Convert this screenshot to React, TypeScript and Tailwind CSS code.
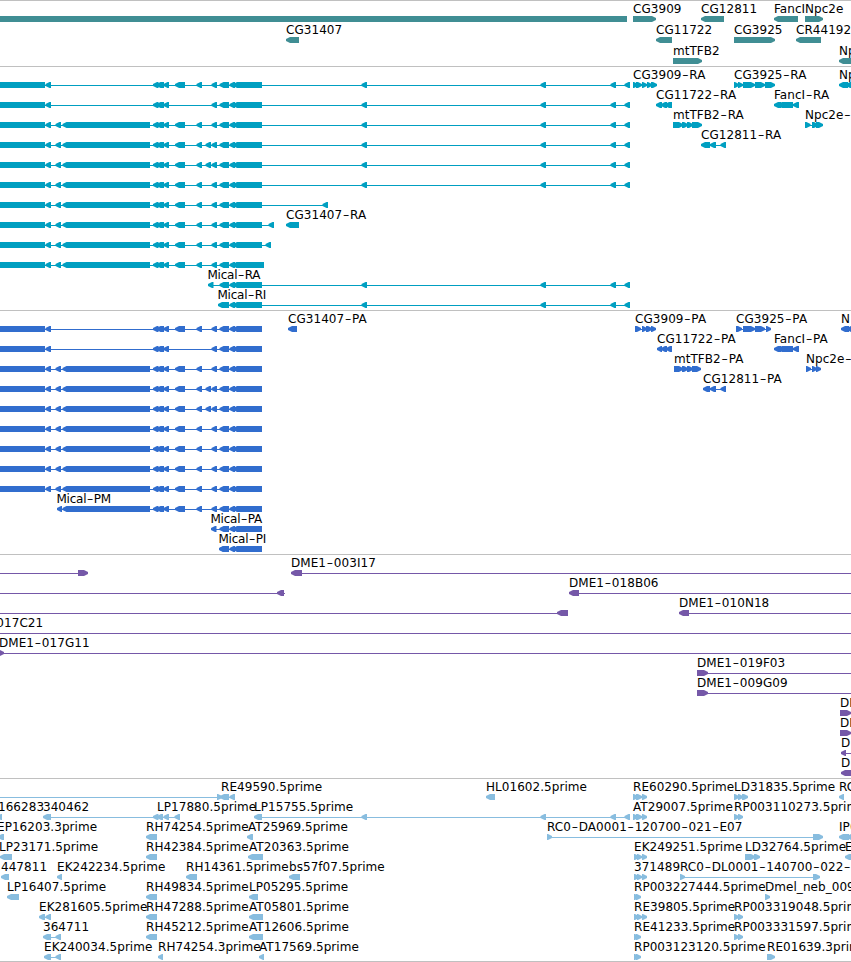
type Span = [number, number];
type Dir = 'left' | 'right';

interface Feature {
  row: number;
  dir?: Dir;
  label?: string;
  x?: number;
  blocks: Span[];
  solid?: Span[];
  line?: Span;
}

interface TrackProps {
  height: number;
  color: string;
  rowHeight?: number;
  barTop: number;
  features: Feature[];
}

// Exons shared by the Mical isoforms
const TAIL: Span[] = [[219.5, 229], [229.5, 235], [233, 262]];
const D: Span[] = [[153, 158.5], [156.5, 164], [163.5, 169]];
const E: Span = [175, 185];
const F: Span = [196.5, 202];
const G: Span = [211.5, 217];
const H: Span = [205.5, 211];
const A: Span = [45.5, 51];
const BC: Span[] = [[55.5, 61], [62.5, 150]];
const UPSTREAM: Span[] = [[361.5, 367], [540.5, 546], [610.5, 616], [624.5, 630]];
const LEFT_BAR: Span[] = [[-5, 45]];

const SHORT: Span[] = [A, ...D, E, F, G, ...TAIL];
const SKIPPED: Span[] = [A, ...D, G, ...TAIL];
const LONG: Span[] = [A, ...BC, ...D, E, F, G, ...TAIL];
const EXTRA: Span[] = [A, ...BC, ...D, E, F, H, G, ...TAIL];

const mical = (row: number, blocks: Span[], end = 262): Feature => ({
  row,
  blocks,
  solid: LEFT_BAR,
  line: [0, end],
});

const GENES: Feature[] = [
  { row: 0, blocks: [], solid: [[-5, 627]] },
  { row: 0, dir: 'right', label: 'CG3909', blocks: [[633, 656]] },
  { row: 0, label: 'CG12811', blocks: [[701, 724]] },
  { row: 0, label: 'FancI', blocks: [[774, 798]] },
  { row: 0, dir: 'right', label: 'Npc2e', blocks: [[805, 823]] },
  { row: 1, label: 'CG31407', blocks: [[286, 299]] },
  { row: 1, label: 'CG11722', blocks: [[656, 672]] },
  { row: 1, dir: 'right', label: 'CG3925', blocks: [[734, 775]] },
  { row: 1, label: 'CR44192', blocks: [[796, 821]] },
  { row: 2, dir: 'right', label: 'mtTFB2', blocks: [[673, 702]] },
  { row: 2, label: 'Np', blocks: [[839, 860]] },
];

const TRANSCRIPTS: Feature[] = [
  mical(0, [...SHORT, ...UPSTREAM], 630),
  mical(1, [...SKIPPED, ...UPSTREAM], 630),
  mical(2, [...LONG, ...UPSTREAM], 630),
  mical(3, [...EXTRA, ...UPSTREAM], 630),
  mical(4, [...EXTRA, ...UPSTREAM], 630),
  mical(5, [...LONG, ...UPSTREAM], 630),
  mical(6, [...LONG, [322.5, 328]], 328),
  mical(7, [...LONG, [268.5, 274]], 274),
  mical(8, [...LONG, [265.5, 271]], 271),
  mical(9, [...LONG, [233, 264]], 264),
  { row: 10, label: 'Mical-RA', x: 207.5, blocks: [[208, 213.5], ...TAIL, ...UPSTREAM] },
  { row: 11, label: 'Mical-RI', x: 217.5, blocks: [[218, 229], ...TAIL, ...UPSTREAM] },
  { row: 7, label: 'CG31407-RA', blocks: [[286, 299]] },
  { row: 0, dir: 'right', label: 'CG3909-RA', blocks: [[633, 638], [636, 642], [642, 647], [647, 652], [651, 657]] },
  { row: 0, dir: 'right', label: 'CG3925-RA', blocks: [[734, 739], [738, 743], [743, 755], [755, 765], [765, 775]] },
  { row: 0, label: 'Np', blocks: [[839, 848], [846, 860]] },
  { row: 1, label: 'CG11722-RA', blocks: [[656, 662], [661, 667], [665, 672]] },
  { row: 1, label: 'FancI-RA', blocks: [[774, 781], [778, 793], [793, 799]] },
  { row: 2, dir: 'right', label: 'mtTFB2-RA', blocks: [[673, 683], [682, 688], [687, 693], [692, 702]] },
  { row: 2, dir: 'right', label: 'Npc2e-RA', blocks: [[805, 810.5], [812, 818], [816, 823]] },
  { row: 3, label: 'CG12811-RA', blocks: [[701, 710], [710, 716], [720.5, 726]] },
];

const PROTEINS: Feature[] = [
  mical(0, SHORT),
  mical(1, SKIPPED),
  mical(2, LONG),
  mical(3, EXTRA),
  mical(4, EXTRA),
  mical(5, LONG),
  mical(6, LONG),
  mical(7, LONG),
  mical(8, LONG),
  { row: 9, label: 'Mical-PM', x: 56.5, blocks: [[57, 62], [62.5, 150], ...D, E, F, G, ...TAIL] },
  { row: 10, label: 'Mical-PA', x: 210.5, blocks: [[211, 216.5], ...TAIL] },
  { row: 11, label: 'Mical-PI', x: 218.5, blocks: [[219, 229], ...TAIL] },
  { row: 0, label: 'CG31407-PA', blocks: [[288, 297]] },
  { row: 0, dir: 'right', label: 'CG3909-PA', blocks: [[635, 641], [642, 647], [646, 652], [651, 656]] },
  { row: 0, dir: 'right', label: 'CG3925-PA', blocks: [[736, 742], [743, 755], [755, 765], [766, 771]] },
  { row: 0, label: 'N', blocks: [[841, 849], [847, 860]] },
  { row: 1, label: 'CG11722-PA', blocks: [[657, 662], [661, 667], [666, 672]] },
  { row: 1, label: 'FancI-PA', blocks: [[774, 781], [778, 793], [793, 799]] },
  { row: 2, dir: 'right', label: 'mtTFB2-PA', blocks: [[674, 683], [682, 688], [687, 693], [692, 701]] },
  { row: 2, dir: 'right', label: 'Npc2e-PA', blocks: [[806, 811], [812, 817], [816, 821]] },
  { row: 3, label: 'CG12811-PA', blocks: [[703, 710], [710, 716], [720.5, 726]] },
];

const CLONES: Feature[] = [
  { row: 0, dir: 'right', blocks: [[78, 88]], line: [0, 88] },
  { row: 0, label: 'DME1-003I17', blocks: [[291, 302]], line: [291, 851] },
  { row: 1, blocks: [[277, 284]], line: [0, 285] },
  { row: 1, label: 'DME1-018B06', blocks: [[569, 579]], line: [569, 851] },
  { row: 2, blocks: [[557, 568]], line: [0, 568] },
  { row: 2, label: 'DME1-010N18', blocks: [[679, 689]], line: [679, 851] },
  { row: 3, label: 'DME1-017C21', x: -46.5, blocks: [], line: [0, 851] },
  { row: 4, dir: 'right', label: 'DME1-017G11', x: -1, blocks: [[-5, 4]], line: [0, 851] },
  { row: 5, dir: 'right', label: 'DME1-019F03', blocks: [[697, 708]], line: [697, 851] },
  { row: 6, dir: 'right', label: 'DME1-009G09', blocks: [[697, 708]], line: [697, 851] },
  { row: 7, dir: 'right', label: 'DM', blocks: [[840, 851]] },
  { row: 8, dir: 'right', label: 'DM', blocks: [[840, 851]] },
  { row: 9, label: 'D', blocks: [[841, 846]], line: [841, 851] },
  { row: 10, label: 'D', blocks: [[841, 860]] },
];

const THREE: Span[] = [[634, 639], [637, 642], [642, 647]];
const TWO: Span[] = [[634, 639], [636, 641]];
const PAIR: Span[] = [[734, 739], [738, 743]];

const ESTS: Feature[] = [
  { row: 0, dir: 'right', blocks: [[217, 222]], line: [0, 222] },
  { row: 0, label: 'RE49590.5prime', x: 221, blocks: [[220, 229], [229.5, 235]] },
  { row: 0, label: 'HL01602.5prime', blocks: [[486, 495]] },
  { row: 0, dir: 'right', label: 'RE60290.5prime', blocks: [[633, 638], [636, 642], [642, 647]] },
  { row: 0, dir: 'right', label: 'LD31835.5prime', blocks: [[734, 739], [738, 743], [742, 748]] },
  { row: 0, label: 'RC', blocks: [[839, 844]] },
  { row: 1, label: '166283', x: -2, blocks: [[-3, 2]] },
  { row: 1, label: '340462', blocks: [[43, 49], [45.5, 51], [153, 158.5], [157, 163], [163.5, 169], [174.5, 180]] },
  { row: 1, label: 'LP17880.5prime', x: 157, blocks: [] },
  { row: 1, label: 'LP15755.5prime', blocks: [[254, 262], ...UPSTREAM] },
  { row: 1, dir: 'right', label: 'AT29007.5prime', blocks: [[633, 638], [636, 642], [642, 647]] },
  { row: 1, dir: 'right', label: 'RP003110273.5prime', blocks: PAIR },
  { row: 2, label: 'EP16203.3prime', x: -3, blocks: [[-2, 4]] },
  { row: 2, label: 'RH74254.5prime', blocks: [[146, 157]] },
  { row: 2, label: 'AT25969.5prime', x: 248, blocks: [[247, 253]] },
  { row: 2, dir: 'right', label: 'RC0-DA0001-120700-021-E07', blocks: [[547, 552], [813, 823]] },
  { row: 2, label: 'IP0', blocks: [[839, 849], [847, 860]] },
  { row: 3, label: 'LP23171.5prime', x: -1, blocks: [[0, 12]] },
  { row: 3, label: 'RH42384.5prime', blocks: [[146, 157]] },
  { row: 3, label: 'AT20363.5prime', x: 249, blocks: [[248, 263]] },
  { row: 3, dir: 'right', label: 'EK249251.5prime', blocks: THREE },
  { row: 3, dir: 'right', label: 'LD32764.5prime', blocks: [[745, 755], [754, 760]] },
  { row: 3, label: 'E', blocks: [[845, 856]] },
  { row: 4, label: '447811', blocks: [[1, 9]] },
  { row: 4, label: 'EK242234.5prime', blocks: [[57, 62]] },
  { row: 4, label: 'RH14361.5prime', blocks: [[186, 197]] },
  { row: 4, label: 'bs57f07.5prime', blocks: [[289, 300]] },
  { row: 4, dir: 'right', label: '371489', blocks: THREE },
  { row: 4, dir: 'right', label: 'RC0-DL0001-140700-022-', blocks: [[680, 685], [813, 820]] },
  { row: 5, label: 'LP16407.5prime', blocks: [[7, 19]] },
  { row: 5, label: 'RH49834.5prime', blocks: [[146, 157]] },
  { row: 5, label: 'LP05295.5prime', blocks: [[249, 258]] },
  { row: 5, dir: 'right', label: 'RP003227444.5prime', blocks: TWO },
  { row: 5, dir: 'right', label: 'Dmel_neb_009', blocks: [[765, 770]] },
  { row: 6, label: 'EK281605.5prime', blocks: [[39, 45], [45.5, 51]] },
  { row: 6, label: 'RH47288.5prime', blocks: [[146, 157]] },
  { row: 6, label: 'AT05801.5prime', blocks: [[249, 263]] },
  { row: 6, dir: 'right', label: 'RE39805.5prime', blocks: THREE },
  { row: 6, dir: 'right', label: 'RP003319048.5prime', blocks: PAIR },
  { row: 7, label: '364711', blocks: [[43, 49], [45.5, 51], [55.5, 61]] },
  { row: 7, label: 'RH45212.5prime', blocks: [[146, 157]] },
  { row: 7, label: 'AT12606.5prime', blocks: [[249, 263]] },
  { row: 7, dir: 'right', label: 'RE41233.5prime', blocks: TWO },
  { row: 7, dir: 'right', label: 'RP003331597.5prime', blocks: PAIR },
  { row: 8, label: 'EK240034.5prime', blocks: [[44, 51], [55.5, 61]] },
  { row: 8, label: 'RH74254.3prime', blocks: [[158, 163]] },
  { row: 8, label: 'AT17569.5prime', blocks: [[259, 264]] },
  { row: 8, dir: 'right', label: 'RP003123120.5prime', blocks: TWO },
  { row: 8, dir: 'right', label: 'RE01639.3prime', blocks: [[767, 775]] },
];

function arrowPoints([a, b]: Span, y: number, dir: Dir) {
  const tip = dir === 'left' ? a : b;
  const back = dir === 'left' ? b : a;
  const s = dir === 'left' ? 1 : -1;
  return [
    [tip, y + 2],
    [tip + s * 2, y + 1],
    [tip + s * 4, y],
    [back, y],
    [back, y + 6],
    [tip + s * 4, y + 6],
    [tip + s * 2, y + 5],
    [tip, y + 4],
  ].map((p) => p.join(',')).join(' ');
}

function Label({ text, x, y }: { text: string; x: number; y: number }) {
  const narrow = text.startsWith('Mical');
  // hyphens are set larger and lighter so that they read as wide dashes
  return (
    <text x={x} y={y} fill="#000" className={narrow ? 'tracking-[-0.25px]' : ''}>
      {text.split(/(-)/).map((part, i) =>
        part === '-' ? (
          <tspan key={i} dy={2.5} className="font-['Lato'] text-[21px] font-light">-</tspan>
        ) : (
          <tspan key={i} dy={i > 0 ? -2.5 : 0}>{part}</tspan>
        ),
      )}
    </text>
  );
}

function Track({ height, color, rowHeight = 20, barTop, features }: TrackProps) {
  return (
    <section className="border-t border-[#c0c0c0]">
      <svg
        width={851}
        height={height}
        className="block overflow-hidden font-['DejaVu_Sans',sans-serif] text-[12px] tracking-[0.05px]"
        fill={color}
      >
        {features.map((f, i) => {
          const y = barTop + f.row * rowHeight;
          const line = f.line ?? (f.blocks.length > 1 ? [f.blocks[0][0] + 1, f.blocks[f.blocks.length - 1][1] - 1] : null);
          return (
            <g key={i}>
              {line && <rect x={line[0]} y={y + 3} width={line[1] - line[0]} height={1} />}
              {f.solid?.map(([a, b]) => <rect key={a} x={a} y={y} width={b - a} height={6} />)}
              {f.blocks.map((b, j) => <polygon key={j} points={arrowPoints(b, y, f.dir ?? 'left')} />)}
            </g>
          );
        })}
        {features.map((f, i) =>
          f.label ? (
            <Label key={i} text={f.label} x={f.x ?? f.blocks[0][0]} y={barTop + f.row * rowHeight - 3} />
          ) : null,
        )}
      </svg>
    </section>
  );
}

export default function App() {
  return (
    <main className="flex h-[962px] w-[851px] flex-col overflow-hidden border-b border-[#c0c0c0] bg-white">
      <Track height={65} color="#408e94" rowHeight={21} barTop={15} features={GENES} />
      <Track height={243} color="#009fc1" barTop={15} features={TRANSCRIPTS} />
      <Track height={243} color="#316dce" barTop={15} features={PROTEINS} />
      <Track height={223} color="#7558a8" barTop={15} features={CLONES} />
      <Track height={182} color="#88bddf" barTop={15} features={ESTS} />
    </main>
  );
}
